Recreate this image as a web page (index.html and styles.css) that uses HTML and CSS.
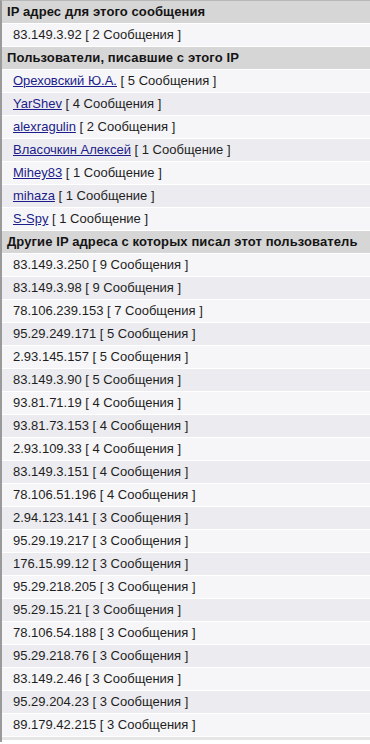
FILE: index.html
```html
<!DOCTYPE html>
<html lang="ru">
<head>
<meta charset="utf-8">
<title>IP</title>
<link rel="stylesheet" href="styles.css">
</head>
<body>
<div class="panel">
  <div class="head">IP адрес для этого сообщения</div>
  <div class="row light">83.149.3.92 [ 2 Сообщения ]</div>
  <div class="head">Пользователи, писавшие с этого IP</div>
  <div class="row light"><a href="#">Ореховский Ю.А.</a> [ 5 Сообщения ]</div>
  <div class="row dark"><a href="#">YarShev</a> [ 4 Сообщения ]</div>
  <div class="row light"><a href="#">alexragulin</a> [ 2 Сообщения ]</div>
  <div class="row dark"><a href="#">Власочкин Алексей</a> [ 1 Сообщение ]</div>
  <div class="row light"><a href="#">Mihey83</a> [ 1 Сообщение ]</div>
  <div class="row dark"><a href="#">mihaza</a> [ 1 Сообщение ]</div>
  <div class="row light"><a href="#">S-Spy</a> [ 1 Сообщение ]</div>
  <div class="head">Другие IP адреса с которых писал этот пользователь</div>
  <div class="row light">83.149.3.250 [ 9 Сообщения ]</div>
  <div class="row dark">83.149.3.98 [ 9 Сообщения ]</div>
  <div class="row light">78.106.239.153 [ 7 Сообщения ]</div>
  <div class="row dark">95.29.249.171 [ 5 Сообщения ]</div>
  <div class="row light">2.93.145.157 [ 5 Сообщения ]</div>
  <div class="row dark">83.149.3.90 [ 5 Сообщения ]</div>
  <div class="row light">93.81.71.19 [ 4 Сообщения ]</div>
  <div class="row dark">93.81.73.153 [ 4 Сообщения ]</div>
  <div class="row light">2.93.109.33 [ 4 Сообщения ]</div>
  <div class="row dark">83.149.3.151 [ 4 Сообщения ]</div>
  <div class="row light">78.106.51.196 [ 4 Сообщения ]</div>
  <div class="row dark">2.94.123.141 [ 3 Сообщения ]</div>
  <div class="row light">95.29.19.217 [ 3 Сообщения ]</div>
  <div class="row dark">176.15.99.12 [ 3 Сообщения ]</div>
  <div class="row light">95.29.218.205 [ 3 Сообщения ]</div>
  <div class="row dark">95.29.15.21 [ 3 Сообщения ]</div>
  <div class="row light">78.106.54.188 [ 3 Сообщения ]</div>
  <div class="row dark">95.29.218.76 [ 3 Сообщения ]</div>
  <div class="row light">83.149.2.46 [ 3 Сообщения ]</div>
  <div class="row dark">95.29.204.23 [ 3 Сообщения ]</div>
  <div class="row light">89.179.42.215 [ 3 Сообщения ]</div>
  <div class="foot"></div>
</div>
</body>
</html>
```

FILE: styles.css
```css
html, body {
  margin: 0;
  padding: 0;
  background: #ffffff;
}

body {
  font-family: "Liberation Sans", Arial, sans-serif;
  font-size: 13px;
  color: #1e1e1e;
  overflow: hidden;
}

.panel {
  display: flex;
  flex-direction: column;
  gap: 1px;
  border-left: 2px solid #9a9a9a;
  border-top: 1px solid #b8b8b8;
  background: #ffffff;
  padding-bottom: 2px;
}

.head {
  height: 22px;
  line-height: 22px;
  padding-left: 5px;
  background: #d6d6d6;
  font-weight: bold;
  letter-spacing: 0.1px;
  color: #141414;
  white-space: nowrap;
}

.row {
  height: 22px;
  line-height: 22px;
  padding-left: 11px;
  white-space: nowrap;
}

.light {
  background: #f6f6f8;
}

.dark {
  background: #ececf0;
}

.row a {
  color: #1c1c8a;
  text-decoration: underline;
}

.foot {
  height: 3px;
  background: #e6e6e6;
}
```
